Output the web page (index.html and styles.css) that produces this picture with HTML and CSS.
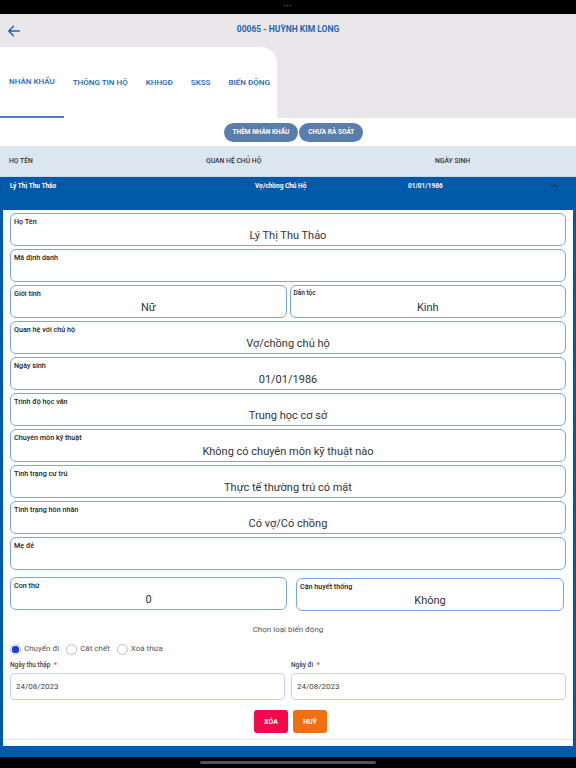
FILE: index.html
```html
<!DOCTYPE html>
<html lang="vi">
<head>
    <meta charset="UTF-8">
    <meta name="viewport" content="width=device-width, initial-scale=1.0">
    <title>00065 - HUỲNH KIM LONG</title>
    <link rel="stylesheet" href="styles.css">
</head>
<body>
    <div class="status-bar"><span>•••</span></div>

    <div class="header">
        <div class="top-bar">
            <svg class="back" width="14" height="14" viewBox="0 0 24 24">
                <path d="M21 12H4 M11 4l-8 8 8 8" fill="none" stroke="#1b66b5" stroke-width="2.6" stroke-linecap="round" stroke-linejoin="round"/>
            </svg>
            <div class="title">00065 - HUỲNH KIM LONG</div>
        </div>
        <div class="tabs">
            <div class="tab active">NHÂN KHẨU</div>
            <div class="tab">THÔNG TIN HỘ</div>
            <div class="tab">KHHGĐ</div>
            <div class="tab">SKSS</div>
            <div class="tab">BIẾN ĐỘNG</div>
        </div>
    </div>

    <div class="actions">
        <button class="pill">THÊM NHÂN KHẨU</button>
        <button class="pill">CHƯA RÀ SOÁT</button>
    </div>

    <div class="table-head">
        <div>HỌ TÊN</div>
        <div>QUAN HỆ CHỦ HỘ</div>
        <div>NGÀY SINH</div>
    </div>

    <div class="row-selected">
        <div>Lý Thị Thu Thảo</div>
        <div>Vợ/chồng Chủ Hộ</div>
        <div>01/01/1986</div>
        <svg class="chevron" width="9" height="6" viewBox="0 0 9 6">
            <path d="M1 5l3.5-3.5 3.5 3.5" fill="none" stroke="#173a66" stroke-width="1.1"/>
        </svg>
    </div>

    <div class="detail">
        <div class="detail-inner">
            <div class="fields">
                <div class="field">
                    <div class="field-label">Họ Tên</div>
                    <div class="field-value">Lý Thị Thu Thảo</div>
                </div>
                <div class="field">
                    <div class="field-label">Mã định danh</div>
                    <div class="field-value"></div>
                </div>
                <div class="field-pair">
                    <div class="field">
                        <div class="field-label">Giới tính</div>
                        <div class="field-value">Nữ</div>
                    </div>
                    <div class="field">
                        <div class="field-label small">Dân tộc</div>
                        <div class="field-value">Kinh</div>
                    </div>
                </div>
                <div class="field">
                    <div class="field-label">Quan hệ với chủ hộ</div>
                    <div class="field-value">Vợ/chồng chủ hộ</div>
                </div>
                <div class="field">
                    <div class="field-label">Ngày sinh</div>
                    <div class="field-value">01/01/1986</div>
                </div>
                <div class="field">
                    <div class="field-label">Trình độ học văn</div>
                    <div class="field-value">Trung học cơ sở</div>
                </div>
                <div class="field">
                    <div class="field-label">Chuyên môn kỹ thuật</div>
                    <div class="field-value">Không có chuyên môn kỹ thuật nào</div>
                </div>
                <div class="field">
                    <div class="field-label">Tình trạng cư trú</div>
                    <div class="field-value">Thực tế thường trú có mặt</div>
                </div>
                <div class="field">
                    <div class="field-label">Tình trạng hôn nhân</div>
                    <div class="field-value">Có vợ/Có chồng</div>
                </div>
                <div class="field">
                    <div class="field-label">Mẹ đẻ</div>
                    <div class="field-value"></div>
                </div>
            </div>

            <div class="field-pair bottom-pair">
                <div class="field">
                    <div class="field-label">Con thứ</div>
                    <div class="field-value">0</div>
                </div>
                <div class="field shifted">
                    <div class="field-label">Cận huyết thống</div>
                    <div class="field-value">Không</div>
                </div>
            </div>

            <div class="change-title">Chọn loại biến động</div>

            <div class="radios">
                <label class="radio"><span class="dot checked"></span>Chuyển đi</label>
                <label class="radio"><span class="dot"></span>Cắt chết</label>
                <label class="radio"><span class="dot"></span>Xoá thừa</label>
            </div>

            <div class="dates">
                <div class="date-group">
                    <div class="date-label">Ngày thu thập <span class="req">*</span></div>
                    <div class="date-input">24/08/2023</div>
                </div>
                <div class="date-group">
                    <div class="date-label">Ngày đi <span class="req">*</span></div>
                    <div class="date-input">24/08/2023</div>
                </div>
            </div>

            <div class="buttons">
                <button class="btn btn-delete">XÓA</button>
                <button class="btn btn-cancel">HUỶ</button>
            </div>

            <div class="divider"></div>
        </div>
    </div>

    <div class="home-bar"><span></span></div>
</body>
</html>
```

FILE: styles.css
```css
body {
    font-family: Roboto, "Noto Sans", sans-serif;
    margin: 0;
    width: 576px;
    height: 768px;
    overflow: hidden;
    background-color: white;
    color: #333;
}

button {
    font-family: inherit;
    border: none;
    cursor: pointer;
}

.status-bar {
    height: 14px;
    background-color: black;
    color: #777;
    font-size: 6px;
    text-align: center;
    line-height: 12px;
    letter-spacing: 1px;
}

.header {
    background-color: #e9e7e9;
    height: 104px;
}

.top-bar {
    height: 33px;
    position: relative;
}

.back {
    position: absolute;
    left: 7px;
    top: 10px;
}

.title {
    text-align: center;
    font-size: 8.5px;
    font-weight: bold;
    color: #1b66b5;
    line-height: 30px;
}

.tabs {
    width: 277px;
    height: 71px;
    background-color: white;
    border-top-right-radius: 16px;
    display: flex;
}

.tab {
    padding: 0 9px;
    font-size: 8px;
    font-weight: 500;
    color: #1b66b5;
    line-height: 71px;
    box-sizing: border-box;
    white-space: nowrap;
}

.tab.active {
    border-bottom: 2px solid #4a80c4;
    line-height: 69px;
}

.actions {
    height: 28px;
    display: flex;
    justify-content: center;
    align-items: center;
    gap: 1px;
    padding-left: 11px;
}

.pill {
    height: 19px;
    border-radius: 10px;
    background-color: #5a7eab;
    color: white;
    font-size: 6.5px;
    font-weight: bold;
    padding: 0 9px;
}

.table-head {
    height: 30px;
    background-color: #dce6f1;
    display: grid;
    grid-template-columns: 197px 229px 1fr;
    align-items: center;
    padding-left: 9px;
    font-size: 6.8px;
    font-weight: 500;
    color: #333;
    border-bottom: 1px solid #c9d8ea;
}

.row-selected {
    height: 33px;
    background-color: #0059a9;
    display: grid;
    grid-template-columns: 245px 153px 142px 1fr;
    padding: 5px 0 0 10px;
    box-sizing: border-box;
    font-size: 6.5px;
    font-weight: bold;
    color: white;
}

.chevron {
    margin-top: 1px;
}

.detail {
    background-color: #0059a9;
    padding: 0 3px 11px;
}

.detail-inner {
    background-color: white;
    padding: 3px 7px 0;
    height: 536px;
    box-sizing: border-box;
}

.fields {
    display: flex;
    flex-direction: column;
    gap: 3px;
}

.field {
    height: 33px;
    box-sizing: border-box;
    border: 1px solid #7ca5d8;
    border-radius: 6px;
    padding: 2px 3px;
}

.field-label {
    font-size: 7.2px;
    font-weight: 500;
    color: #222;
    line-height: 11px;
}

.field-label.small {
    font-size: 6.5px;
}

.field-value {
    font-size: 11px;
    color: #333;
    text-align: center;
    line-height: 14px;
    margin-top: 2px;
}

.field-pair {
    display: grid;
    grid-template-columns: 1fr 1fr;
    gap: 3px;
}

.field-pair.bottom-pair {
    margin-top: 7px;
    grid-template-columns: 277px 268px;
    gap: 9px;
}

.field.shifted {
    margin-top: 1px;
}

.change-title {
    text-align: center;
    font-size: 8px;
    color: #555;
    margin-top: 14px;
    line-height: 10px;
}

.radios {
    display: flex;
    gap: 7px;
    margin-top: 8px;
    font-size: 8px;
    color: #555;
    line-height: 12px;
}

.radio {
    display: flex;
    align-items: center;
    gap: 3px;
}

.dot {
    width: 11px;
    height: 11px;
    border: 1px solid #b9bddc;
    border-radius: 50%;
    box-sizing: border-box;
    display: inline-block;
}

.dot.checked {
    border-color: #b9c3ee;
    background: radial-gradient(circle, #1f3ed8 3.5px, white 4px);
}

.dates {
    display: grid;
    grid-template-columns: 275px 1fr;
    gap: 6px;
    margin-top: 6px;
}

.date-label {
    font-size: 6.5px;
    font-weight: 500;
    color: #444;
    line-height: 9px;
    margin-bottom: 3px;
}

.req {
    color: #e8245a;
    margin-left: 2px;
}

.date-input {
    height: 27px;
    box-sizing: border-box;
    border: 1px solid #c8cdf6;
    border-radius: 4px;
    font-size: 8px;
    color: #444;
    padding-left: 5px;
    line-height: 25px;
}

.buttons {
    display: flex;
    justify-content: center;
    gap: 5px;
    margin-top: 10px;
    padding-left: 5px;
}

.btn {
    width: 34px;
    height: 23px;
    border-radius: 3px;
    color: white;
    font-size: 7px;
    font-weight: bold;
}

.btn-delete {
    background-color: #f5074b;
}

.btn-cancel {
    background-color: #ef7010;
}

.divider {
    margin: 6px -7px 0;
    border-top: 1px solid #e2e2e2;
}

.home-bar {
    height: 11px;
    background-color: black;
    display: flex;
    justify-content: center;
    align-items: center;
}

.home-bar span {
    width: 176px;
    height: 3px;
    border-radius: 2px;
    background-color: #555;
}
```
